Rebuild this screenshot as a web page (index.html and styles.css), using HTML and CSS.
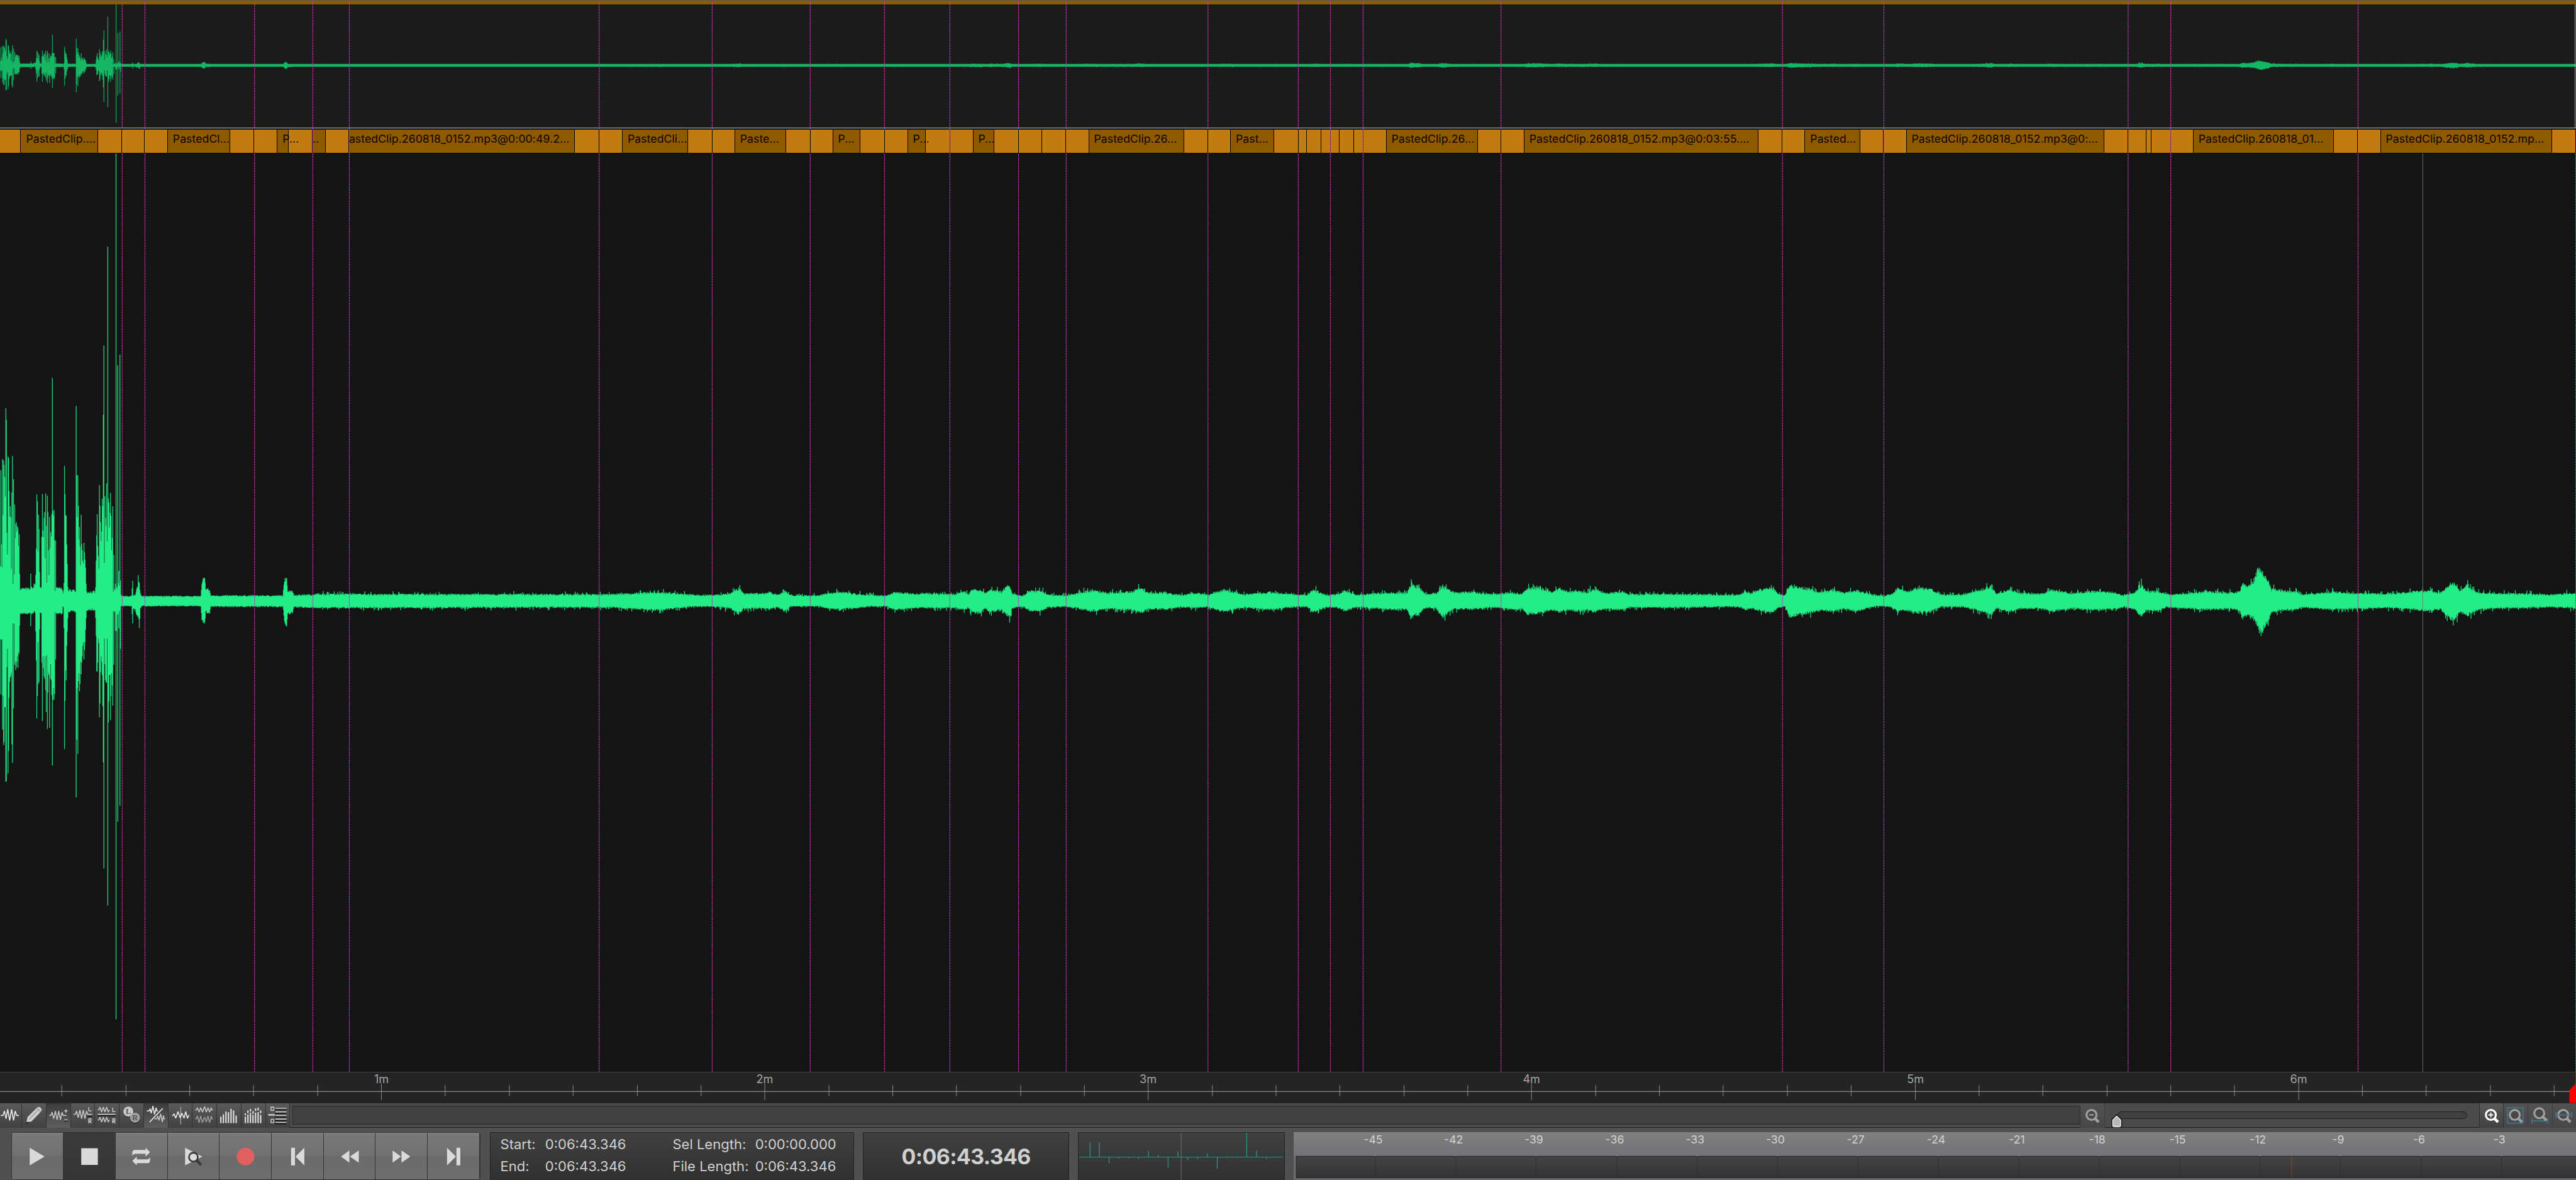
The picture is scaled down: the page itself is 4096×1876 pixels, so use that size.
FILE: index.html
```html
<!DOCTYPE html>
<html lang="en">
<head>
	<meta charset="utf-8">
	<title>Audio Editor</title>
	<link rel="stylesheet" href="styles.css">
</head>
<body>
	<div class="app">
		<div class="editor">
			<div class="selection-bar"></div>
			<svg class="overview" id="overview" viewBox="0 8 4650 223"></svg>
			<div class="clips" id="clips"></div>
			<svg class="wave" id="wave" viewBox="0 277 4650 1658"></svg>
			<svg class="markers" id="markers" viewBox="0 0 4650 1935"></svg>
		</div>
		<svg class="ruler" id="ruler" viewBox="0 1935 4650 56"></svg>

		<div class="toolbar">
			<div class="tools">
				<button class="tool"><svg viewBox="0 0 44 44"><path class="ink bright" d="M6 22h4l2.500-8 3 14 3-17 3.500 20 3.500-20 3.500 20 3-17 2.500 8h4"/></svg></button>
				<button class="tool"><svg viewBox="0 0 44 44"><path fill="#222" d="M7 38l2-9 4 6z"/><path fill="#d0d0d0" d="M8 34l2-9L28 7q4-2 7 3 1 3-1 5L17 33z"/><path d="M13 29L30 11M27 8l6 7" stroke="#999" stroke-width="1.6"/></svg></button>
				<button class="tool on"><svg viewBox="0 0 44 44"><path class="ink" d="M5 22h3l2-6 3 12 3-14 3 16 3-16 3 16 3-14 2 6h6M32 14h6M35 11v6"/><path class="ink shade" d="M32 32h6"/><path class="ink" d="M32 30h6"/></svg></button>
				<button class="tool"><svg viewBox="0 0 44 44"><path class="ink" d="M5 20h3l2-6 3 12 3-14 3 16 3-16 3 16 3-14 2 6h8M32 7v7h5"/><path class="ink shade" d="M29 24h9"/><path class="ink" d="M32 36v-8h4v4h-4l5 4"/></svg></button>
				<button class="tool"><svg viewBox="0 0 44 44"><path class="ink" d="M5 12h2l2-5 3 9 3-9 3 9 3-9 3 9 2-4M5 20h32M5 30h2l2-5 3 9 3-9 3 9 3-9 3 9 2-4M32 8v7h5M32 36v-8h4v4h-4l5 4"/><path class="ink shade" d="M5 22.500h32"/></svg></button>
				<button class="tool"><svg viewBox="0 0 44 44"><circle cx="17" cy="17" r="9" fill="#333"/><circle cx="28" cy="28" r="9" fill="#2d2d2d"/><circle cx="16" cy="15" r="9" fill="#c8c8c8"/><circle cx="28" cy="26" r="9" fill="#a0a0a0"/><text class="badge" x="16" y="19.500">L</text><text class="badge" x="28" y="31">R</text></svg></button>
				<button class="tool on"><svg viewBox="0 0 44 44"><path class="ink bright" d="M5 14h4l2-4 2 8 3-13 3 15 3-12 1 6h2M10 34L34 9"/><path class="ink" d="M19 28h4l2-5 2 8 3-12 3 15 2-12 1 6h2"/></svg></button>
				<button class="tool"><svg viewBox="0 0 44 44"><path class="ink grey" d="M22 6v32"/><path class="ink bright" d="M7 23l3-4 3 8 4-12 4 11 3-8 4 9 3-12 3 12 3-6"/></svg></button>
				<button class="tool"><svg viewBox="0 0 44 44"><path class="ink" d="M5 12h2l2-4 3 8 3-8 3 8 4-10 3 10 3-8 3 8 3-8 1 4h2"/><path class="ink grey" d="M5 28h2l2-5 3 12 3-12 3 12 4-10 3 9 3-11 3 12 3-12 1 5h2"/></svg></button>
				<button class="tool"><svg viewBox="0 0 44 44"><path class="ink bars" d="M7 35V25M11.600 35V21M16.200 35V16M20.800 35V17M25.400 35V11M30 35V14M34.600 35V23"/></svg></button>
				<button class="tool"><svg viewBox="0 0 44 44"><path class="ink bars" d="M7 35V25M11.600 35V21M16.200 35V18M20.800 35V22M25.400 35V18M30 35V17M34.600 35V22M7 21v-2M11.600 17v-3M16.200 14v-3M20.800 18v-3M25.400 13v-3M30 12V9M34.600 17v-3"/></svg></button>
				<button class="tool"><svg viewBox="0 0 44 44"><path class="ink shade" d="M16 12h21M16 18.500h21M16 25h21M16 31.500h21M16 37h21"/><path class="ink" d="M17 9h20M17 15.500h20M17 22h20M17 28.500h20M17 34.500h20M9 7h5v6H9zM9 29h5v6H9zM4 22l3-2 3 2 3-2 3 2M4 20l3 2 3-2 3 2 3-2"/></svg></button>
			</div>
			<div class="scrollbar"></div>
			<button class="tool flat"><svg viewBox="0 0 44 44"><circle class="lens" cx="20" cy="21" r="9"/><path class="handle" d="M27 28l6 6"/><path class="ink" d="M16 21h8"/></svg></button>
			<div class="slider">
				<div class="slider-track"></div>
				<svg class="slider-thumb" viewBox="0 0 22 26"><path d="M2 10.500L11 1.500l9 9V22l-3 3H5l-3-3z" fill="#b8b8b8" stroke="#1c1c1c" stroke-width="2"/><path d="M4 11l7-7 7 7v11H4z" fill="none" stroke="#e8e8e8" stroke-width="1.500"/></svg>
			</div>
			<div class="tools zooms">
				<button class="tool"><svg viewBox="0 0 44 44"><circle class="lens white" cx="20" cy="21" r="9"/><path class="handle white" d="M27 28l6 6"/><path d="M15.500 21h9M20 16.500v9" stroke="#fff" stroke-width="2"/></svg></button>
				<button class="tool flat"><svg viewBox="0 0 44 44"><path class="blue" d="M7 8h28v28H7z"/><circle class="lens" cx="20" cy="21" r="9"/><path class="handle" d="M27 28l6 6"/></svg></button>
				<button class="tool flat"><svg viewBox="0 0 44 44"><path class="blue" d="M7 27v10M35 27v10M7 32h28"/><circle class="lens" cx="20" cy="18" r="9"/><path class="handle" d="M27 25l6 6"/></svg></button>
				<button class="tool flat"><svg viewBox="0 0 44 44"><circle class="lens" cx="19" cy="21" r="9"/><path class="handle" d="M26 28l6 6"/><path class="blue" d="M6 16v10M34 16v10M6 21h28"/></svg></button>
			</div>
		</div>

		<div class="transport">
			<div class="buttons">
				<button class="key"><svg viewBox="0 0 93 85"><path d="M32 28l27 16-27 16z"/></svg></button>
				<button class="key pressed"><svg viewBox="0 0 93 85"><path d="M32 29h30v30H32z"/></svg></button>
				<button class="key"><svg viewBox="0 0 93 85"><path d="M30 43v-6q0-5 5-5h19v-4l8 8-8 8v-5H36q-4 0-6 4zM62 45v6q0 5-5 5H38v4l-8-8 8-8v5h18q4 0 6-4z"/></svg></button>
				<button class="key"><svg viewBox="0 0 93 85"><path d="M31 28l31 16-31 16z"/><path d="M52 51l8 8" stroke="#3a3a3a" stroke-width="5"/><circle cx="46" cy="45" r="8" fill="#dcdcdc" stroke="#3a3a3a" stroke-width="3"/></svg></button>
				<button class="key"><svg viewBox="0 0 93 85"><circle cx="47" cy="44" r="16" fill="#e06060"/></svg></button>
				<button class="key"><svg viewBox="0 0 93 85"><path d="M35 28h7v32h-7zM59 28v32L43 44z"/></svg></button>
				<button class="key"><svg viewBox="0 0 93 85"><path d="M46 33v22L31 44zM63 33v22L47 44z"/></svg></button>
				<button class="key"><svg viewBox="0 0 93 85"><path d="M31 33v22l15-11zM47 33v22l16-11z"/></svg></button>
				<button class="key"><svg viewBox="0 0 93 85"><path d="M52 28h7v32h-7zM35 28v32l16-16z"/></svg></button>
			</div>
			<div class="panel info">
				<span>Start:</span><span>0:06:43.346</span><span>Sel Length:</span><span>0:00:00.000</span>
				<span>End:</span><span>0:06:43.346</span><span>File Length:</span><span>0:06:43.346</span>
			</div>
			<div class="panel clock">0:06:43.346</div>
			<svg class="panel scope" id="scope" viewBox="1946 2043 373 87"></svg>
			<svg class="meter" id="meter" viewBox="2335 2044 2315 86"></svg>
		</div>
	</div>
	<script src="script.js"></script>
</body>
</html>
```
FILE: styles.css
```css
body {
	margin: 0;
	background-color: #141414;
	overflow: hidden;
	font-family: Inter, "Liberation Sans", sans-serif;
}

.app {
	zoom: 0.88086;
	width: 4650px;
	height: 2130px;
	display: flex;
	flex-direction: column;
	overflow: hidden;
}

svg {
	display: block;
}

button {
	border: 0;
	padding: 0;
	background: none;
}

.editor {
	position: relative;
	height: 1935px;
	display: flex;
	flex-direction: column;
}

.selection-bar {
	box-sizing: border-box;
	height: 8px;
	border-top: 1px solid #555;
	background-color: #8f5900;
}

.overview {
	width: 4650px;
	height: 223px;
	background-color: #1b1b1b;
}

.clips {
	box-sizing: border-box;
	display: flex;
	height: 46px;
	border-top: 1px solid #c0d2dc;
	border-bottom: 2px solid #050505;
	padding-top: 2px;
	background-color: #050505;
}

.clip {
	flex: none;
	box-sizing: border-box;
	border-right: 2px solid #050505;
	background-color: #c17c11;
	font-size: 20px;
	line-height: 33px;
	letter-spacing: 0.1px;
	white-space: nowrap;
	color: #0a0600;
}

.clip.named {
	padding-left: 9px;
	background-color: #8f5900;
}

.clip.named span {
	position: relative;
	z-index: 1;
}

.clip.cut {
	padding-left: 0;
	overflow: hidden;
}

.wave {
	width: 4650px;
	height: 1658px;
	background-color: #141414;
}

.markers {
	position: absolute;
	top: 0;
	left: 0;
	z-index: 2;
	width: 4650px;
	height: 1935px;
}

.ruler {
	width: 4650px;
	height: 56px;
	background-color: #242424;
}

.ruler text {
	font-size: 20.5px;
	fill: #a5a5a5;
	text-anchor: middle;
}

.toolbar {
	box-sizing: border-box;
	height: 45px;
	display: flex;
	align-items: stretch;
	background-color: #4b4b4b;
	border-bottom: 1px solid #1e1e1e;
}

.tools {
	display: flex;
	margin-left: -4px;
}

.tool {
	flex: none;
	box-sizing: border-box;
	width: 44px;
	height: 44px;
	border-right: 1px solid #333;
	background: linear-gradient(#5a5a5a, #414141);
}

.tool.on {
	background: linear-gradient(#3c3c3c, #5e5e5e);
}

.tool.flat {
	background: linear-gradient(#525252, #474747);
	border-color: #3e3e3e;
}

.tool svg {
	width: 44px;
	height: 44px;
}

.ink {
	fill: none;
	stroke: #c4c4c4;
	stroke-width: 1.8;
	stroke-linejoin: bevel;
}

.ink.bright {
	stroke: #ededed;
}

.ink.grey {
	stroke: #999;
}

.ink.shade {
	stroke: #111;
}

.ink.bars {
	stroke: #e2e2e2;
	stroke-width: 2.4;
	stroke-linecap: round;
}

.badge {
	font: bold 14px "Liberation Serif", serif;
	fill: #555;
	text-anchor: middle;
}

.lens {
	fill: #484848;
	stroke: #a0a0a0;
	stroke-width: 3.6;
}

.handle {
	stroke: #a0a0a0;
	stroke-width: 5;
}

.white {
	stroke: #fff;
}

.blue {
	fill: none;
	stroke: #3f7890;
	stroke-width: 2;
}

.scrollbar {
	box-sizing: border-box;
	width: 3228px;
	height: 34px;
	margin: 5px 0 0 4px;
	border: 1px solid #2b2b2b;
	background-color: #404040;
}

.slider {
	position: relative;
	flex: 1;
	padding: 15px 21px 0 22px;
}

.slider-track {
	box-sizing: border-box;
	height: 14px;
	border: 1px solid #1e1e1e;
	border-radius: 7px;
	background-color: #404040;
}

.slider-thumb {
	position: absolute;
	left: 10px;
	top: 19px;
	width: 22px;
	height: 26px;
}

.zooms {
	margin: 0 -2px 0 0;
	border-left: 1px solid #2b2b2b;
}

.transport {
	height: 94px;
	display: flex;
	background-color: #505050;
	padding-left: 20px;
}

.buttons {
	flex: none;
	box-sizing: border-box;
	display: flex;
	width: 847px;
	height: 86px;
	margin: 8px 17px 0 0;
	border: 1px solid #333;
	border-radius: 4px;
	overflow: hidden;
}

.key {
	flex: 1 1 0;
	min-width: 0;
	box-sizing: border-box;
	border-right: 1px solid #333;
	border-top: 1px solid #8a8a8a;
	background: linear-gradient(#797979, #707070 50%, #6a6a6a 50%, #6e6e6e);
}

.key.pressed {
	border-top-color: #333;
	background: linear-gradient(#3b3b3b, #353535);
}

.key svg {
	width: 93px;
	height: 85px;
	margin-top: -3px;
	fill: #dadada;
}

.panel {
	box-sizing: border-box;
	height: 88px;
	margin-top: 7px;
	border: 1px solid #222;
	background: linear-gradient(#404040, #303030);
	color: #d0d0d0;
}

.info {
	width: 658px;
	display: grid;
	grid-template-columns: 81px 230px 149px 160px;
	grid-template-rows: 40px 40px;
	padding-left: 18px;
	font-size: 25px;
	line-height: 41px;
}

.clock {
	width: 373px;
	margin-left: 16px;
	font-size: 38.5px;
	font-weight: bold;
	letter-spacing: -0.7px;
	line-height: 86px;
	text-align: center;
}

.scope {
	width: 373px;
	margin-left: 16px;
}

.meter {
	flex: none;
	width: 2315px;
	height: 86px;
	margin: 8px 0 0 16px;
}

.meter text {
	font-size: 20px;
	fill: #d2d2d2;
	text-anchor: middle;
}
```
FILE: script.js
```js
// [right edge, name] - clips without a name are the crossfade handles
var clips = [
	[38], [177, "PastedClip...."], [220], [261], [303], [416, "PastedCl..."], [459], [501],
	[521, "P..."], [564], [588, ".."], [630], [1038, "astedClip.260818_0152.mp3@0:00:49.2..."],
	[1082], [1124], [1242, "PastedCli..."], [1286], [1327], [1419, "Paste..."], [1463], [1504],
	[1553, "P..."], [1597], [1639], [1671, "P..."], [1715], [1757], [1795, "P..."], [1839], [1881],
	[1925], [1966], [2138, "PastedClip.26..."], [2181], [2222], [2300, "Past..."], [2344], [2359],
	[2385], [2402], [2418], [2444], [2461], [2503], [2668, "PastedClip.26..."], [2710], [2752],
	[3175, "PastedClip.260818_0152.mp3@0:03:55...."], [3218], [3259], [3358, "Pasted..."], [3401],
	[3442], [3799, "PastedClip.260818_0152.mp3@0:..."], [3842], [3875], [3884], [3919], [3960],
	[4213, "PastedClip.260818_01..."], [4257], [4298], [4607, "PastedClip.260818_0152.mp..."], [4650]
];

var markers = [220, 261, 459, 564, 630, 1081, 1285, 1462, 1596, 1714, 1838, 1924, 2180, 2343,
	2401, 2460, 2709, 3217, 3400, 3841, 3918, 4256];

// markers that stay visible over the clip lane
var overClips = [564, 630, 1714, 2401, 2460, 3400, 3918];

// speech at the start: [x, top, bottom], centre line is 716
var speech = [
	[0,650,788],[3,469,892],[5,609,788],[8,652,788],[10,448,958],[13,553,895],[16,451,987],[18,459,982],
	[21,482,916],[24,519,915],[26,352,1057],[29,374,1055],[31,587,840],[34,628,806],[37,443,1041],
	[39,446,998],[42,508,898],[44,556,868],[47,537,860],[50,558,857],[52,655,851],[55,511,986],
	[57,442,1021],[60,684,758],[63,486,918],[65,666,758],[68,534,836],[71,598,830],[73,571,846],
	[76,567,840],[78,585,830],[81,575,820],[84,579,842],[86,612,812],[89,590,815],[92,665,762],
	[94,693,739],[144,664,763],[147,691,739],[159,685,736],[167,667,773],[170,617,828],[172,515,937],
	[175,528,895],[178,622,793],[180,553,872],[183,580,868],[186,661,769],[188,690,739],[196,595,832],
	[199,514,942],[201,583,820],[204,595,842],[206,559,858],[209,548,862],[212,636,820],[214,513,884],
	[217,574,925],[220,681,818],[222,517,957],[225,548,888],[227,620,851],[230,667,855],[233,557,955],
	[235,616,862],[238,586,835],[240,594,865],[243,552,893],[246,295,1026],[248,546,902],[251,555,880],
	[253,544,902],[256,601,891],[259,696,737],[261,602,826],[264,692,739],[296,700,728],[301,682,767],
	[303,461,995],[306,514,904],[308,554,847],[311,555,865],[314,609,800],[316,646,773],[319,690,750],
	[322,696,735],[358,348,1086],[361,478,977],[363,557,880],[366,479,1004],[368,536,867],[371,599,852],
	[374,576,886],[376,613,872],[379,648,830],[382,553,854],[384,608,832],[387,620,820],[389,640,800],
	[392,645,793],[395,606,826],[397,624,808],[400,638,793],[402,653,770],[405,683,748],[408,699,732],
	[450,692,748],[452,640,782],[455,592,848],[457,552,849],[460,612,832],[463,631,787],[465,655,795],
	[468,497,935],[470,536,909],[473,567,850],[476,603,820],[478,585,830],[481,523,855],[484,537,914],
	[486,364,1020],[489,234,1220],[491,644,787],[494,518,835],[497,559,865],[499,574,869],[502,494,870],
	[504,603,787],[507,47,1290],[510,522,945],[512,530,905],[515,577,855],[518,549,855],[520,512,940],
	[523,555,895],[525,620,852],[528,597,875],[531,537,913],[533,697,735],[536,629,836],[538,695,735],
	[544,683,772],[546,-164,1505],[549,690,773],[552,694,741],[554,271,1132],[557,682,741],[559,659,767],
	[562,685,735],[564,251,1102],[567,677,806],[570,706,723],[573,708,726]
];

// envelope of the rest: [x, up, down] in pixels
var quiet = [
	[219,9,9],[237,9,9],[239,36,38],[240,12,16],[244,12,16],[246,24,26],[248,24,28],[249,50,28],[251,32,45],
	[253,14,14],[256,9,9],[362,9,9],[364,30,32],[366,40,42],[369,40,40],[371,24,20],[378,20,22],[380,10,10],
	[510,10,10],[513,36,34],[517,48,48],[519,18,24],[527,20,22],[530,11,11],[570,12,12]
];

function addQuiet(left, list) {
	for (var i = 0; i < list.length; i += 3) {
		quiet.push([left + list[i] / 0.7743, list[i + 1] / 3, list[i + 2] / 3]);
	}
}

addQuiet(600, [0,38,36,370,36,34,400,38,36,430,44,44,455,48,50,480,42,40,500,33,30,535,32,30,555,42,40,
	568,70,70,575,40,40,600,42,40,610,48,45,622,35,32,633,55,58,640,32,28,680,30,28,690,42,40,710,48,45,
	740,36,34,750,32,28,775,30,28,785,48,48,815,40,38,870,38,36,884,52,50,888,36,36,895,65,65,905,60,65,
	912,44,40,918,60,60,935,50,50,946,92,90,950,40,38,965,28,30,975,55,52,990,55,55,1000,34,32,
	1025,30,30,1040,42,38,1060,58,55,1085,44,42,1115,50,48,1130,72,64,1140,45,42,1165,44,44,1185,32,32,
	1205,44,38,1225,34,32,1245,62,58,1262,50,45,1275,36,34,1310,48,48,1340,38,34,1362,34,30,1370,62,60,
	1390,32,32,1405,38,36,1415,58,52,1430,34,32,1475,46,44,1502,44,46,1507,92,92,1518,75,70,1528,38,36,
	1543,42,40,1551,85,90,1560,60,60,1567,50,48]);
addQuiet(2625, [0,46,42,25,50,44,50,38,34,65,42,38,80,46,44,95,40,42,102,70,70,120,72,68,135,50,48,
	148,70,60,160,50,48,170,58,56,185,46,48,195,66,58,212,44,42,236,52,50,245,36,34,290,40,36,330,36,34,
	390,34,30,400,38,34,407,52,48,415,42,40,425,62,50,445,70,60,452,44,40,462,30,30,468,85,85,490,72,70,
	510,50,50,530,60,55,545,44,42,562,58,56,585,34,30,600,28,26,612,38,36,619,70,60,632,50,48,645,70,65,
	665,68,58,680,36,32,710,34,30,730,55,50,750,80,75,758,40,38,775,65,60,790,44,42,820,40,38,835,60,55,
	865,42,40,890,54,48,925,46,44,935,30,30,950,48,44,960,85,80,968,50,46,985,55,54,995,36,34,1020,40,38,
	1050,52,46,1085,46,42,1098,52,50,1101,95,95,1108,80,75,1116,100,90,1123,175,140,1127,175,185,
	1137,110,110,1142,65,60,
	1155,60,50,1175,50,48,1185,36,34,1230,50,46,1260,42,42,1310,40,36,1358,58,52,1378,44,44,1390,90,90,
	1397,100,105,1405,60,60,1415,85,80,1430,48,48,1460,42,38,1500,40,36,1530,34,32,1568,44,38]);

var seed = 7;
function random() {
	seed = (seed * 16807) % 2147483647;
	return seed / 2147483647;
}

function jitter(amount, x) {
	var n = amount * (0.84 + random() * 0.24);
	if (x > 570 && random() < 0.14) {
		n += amount * random() * 0.45;
	}
	return n;
}

var peaks = [];
var x, k;
for (x = 0, k = 0; x < 219; x++) {
	while (k < speech.length - 1 && Math.round(speech[k + 1][0] / 2.6133) <= x) k++;
	var up = (716 - speech[k][1]) / 1.0453;
	var down = (speech[k][2] - 716) / 1.0453;
	if (up < 30) {
		up += (random() - 0.5) * 5;
		down += (random() - 0.5) * 4;
	}
	peaks.push([up, down]);
}
for (k = 0; x < 4650; x++) {
	while (k < quiet.length - 2 && quiet[k + 1][0] <= x) k++;
	var a = quiet[k], b = quiet[k + 1];
	var t = Math.min(1, (x - a[0]) / (b[0] - a[0]));
	peaks.push([jitter(a[1] + (b[1] - a[1]) * t, x), jitter(a[2] + (b[2] - a[2]) * t, x)]);
}

function wavePath(centre, scale, least) {
	var top = "M0 " + centre;
	var bottom = "";
	peaks.forEach(function (p, i) {
		var u = (centre - Math.max(least, p[0] * scale)).toFixed(1);
		var d = (centre + Math.max(least, p[1] * scale)).toFixed(1);
		top += "V" + u + "H" + (i + 1);
		bottom = "V" + d + "H" + i + bottom;
	});
	return top + bottom + "z";
}

document.getElementById("overview").innerHTML =
	'<path d="' + wavePath(118, 0.137, 2.3) + '" fill="#15b765" stroke="#15b765" stroke-width="0.3"/>' +
	'<path d="M4648.500 8V231" stroke="#b9b9b9"/>';
document.getElementById("wave").innerHTML =
	'<path d="' + wavePath(1085, 1, 8) + '" fill="#24ec87" stroke="#24ec87" stroke-width="0.35"/>' +
	'<path d="M4373.500 277V1935" stroke="#777"/>';

var html = "";
var left = 0;
clips.forEach(function (clip) {
	var name = clip[1] || "";
	var cls = "clip" + (name ? " named" : "") + (name[0] === "a" || name === ".." ? " cut" : "");
	html += '<div class="' + cls + '" style="width:' + (clip[0] - left) + 'px"><span>' + name + "</span></div>";
	left = clip[0];
});
document.getElementById("clips").innerHTML = html;

function markerLine(x, top, bottom) {
	return '<path d="M' + (x + 0.5) + " " + top + "V" + bottom + '" stroke="#d22fbe" stroke-width="1.15" stroke-dasharray="4 1"/>' +
		'<path d="M' + (x + 1.5) + " " + top + "V" + bottom + '" stroke="#777" stroke-opacity="0.15" stroke-dasharray="4 1"/>';
}

html = "";
markers.forEach(function (m) {
	var top = m === 220 || m === 459 ? 8 : 1;
	if (overClips.indexOf(m) >= 0) {
		html += markerLine(m, top, 1935);
	} else {
		html += markerLine(m, top, 233) + markerLine(m, 277, 1935);
	}
});
html += markerLine(4649, 277, 1935);
document.getElementById("markers").innerHTML = html;

html = '<path d="M0 1935.500H4650" stroke="#444"/><path d="M0 1970.500H4650" stroke="#b5b5b5"/>';
for (var i = 1; i < 41; i++) {
	var tick = Math.round(-4 + i * 692.1 / 6) + 0.5;
	if (i % 6 === 0) {
		html += '<path d="M' + tick + ' 1956V1986" stroke="#999"/>';
		html += '<text x="' + tick + '" y="1955">' + i / 6 + "m</text>";
	} else {
		html += '<path d="M' + tick + ' 1959V1979" stroke="#999"/>';
	}
}
html += '<path d="M4649 1935h1v56h-12v-23l11-11z" fill="#f00"/>';
document.getElementById("ruler").innerHTML = html;

// stereo phase scope: [x, y]
var spikes = [[1965,2061],[1982,2060],[2000,2099],[2018,2090],[2036,2089],[2054,2091],[2072,2076],
	[2090,2084],[2108,2107],[2126,2077],[2144,2093],[2162,2091],[2180,2081],[2198,2109],[2216,2089],
	[2234,2089],[2252,2043],[2270,2075],[2288,2091]];
html = '<path d="M2132.500 2043V2130" stroke="#777"/><path d="M1946 2087.500H2319" stroke="#2aa89a"/>';
spikes.forEach(function (s) {
	html += '<path d="M' + (s[0] + 0.5) + " 2087V" + s[1] + '" stroke="#2aa89a" stroke-width="1.2"/>';
});
document.getElementById("scope").innerHTML = html;

html = '<defs><linearGradient id="band" x2="0" y2="1"><stop stop-color="#808080"/><stop offset="1" stop-color="#727278"/></linearGradient>' +
	'<linearGradient id="bar" x2="0" y2="1"><stop stop-color="#434343"/><stop offset="1" stop-color="#333"/></linearGradient></defs>' +
	'<rect x="2335" y="2044" width="2315" height="43" fill="url(#band)"/>' +
	'<rect x="2335" y="2087" width="2315" height="43" fill="#6b6b74"/>' +
	'<rect x="2339" y="2087" width="2311" height="40" fill="#222"/>' +
	'<rect x="2340" y="2088" width="2310" height="38" fill="url(#bar)"/>';
for (var db = -45; db <= 0; db += 3) {
	var mx = Math.round(4660 + db * 48.4) + 0.5;
	html += '<path d="M' + mx + ' 2085v2" stroke="#bbb"/><path d="M' + mx + ' 2088v36" stroke="#303030"/>';
	html += '<text x="' + (mx - 4) + '" y="2065">' + db + "</text>";
}
html += '<path d="M4136.500 2088V2125" stroke="#e82020"/>';
document.getElementById("meter").innerHTML = html;
```
